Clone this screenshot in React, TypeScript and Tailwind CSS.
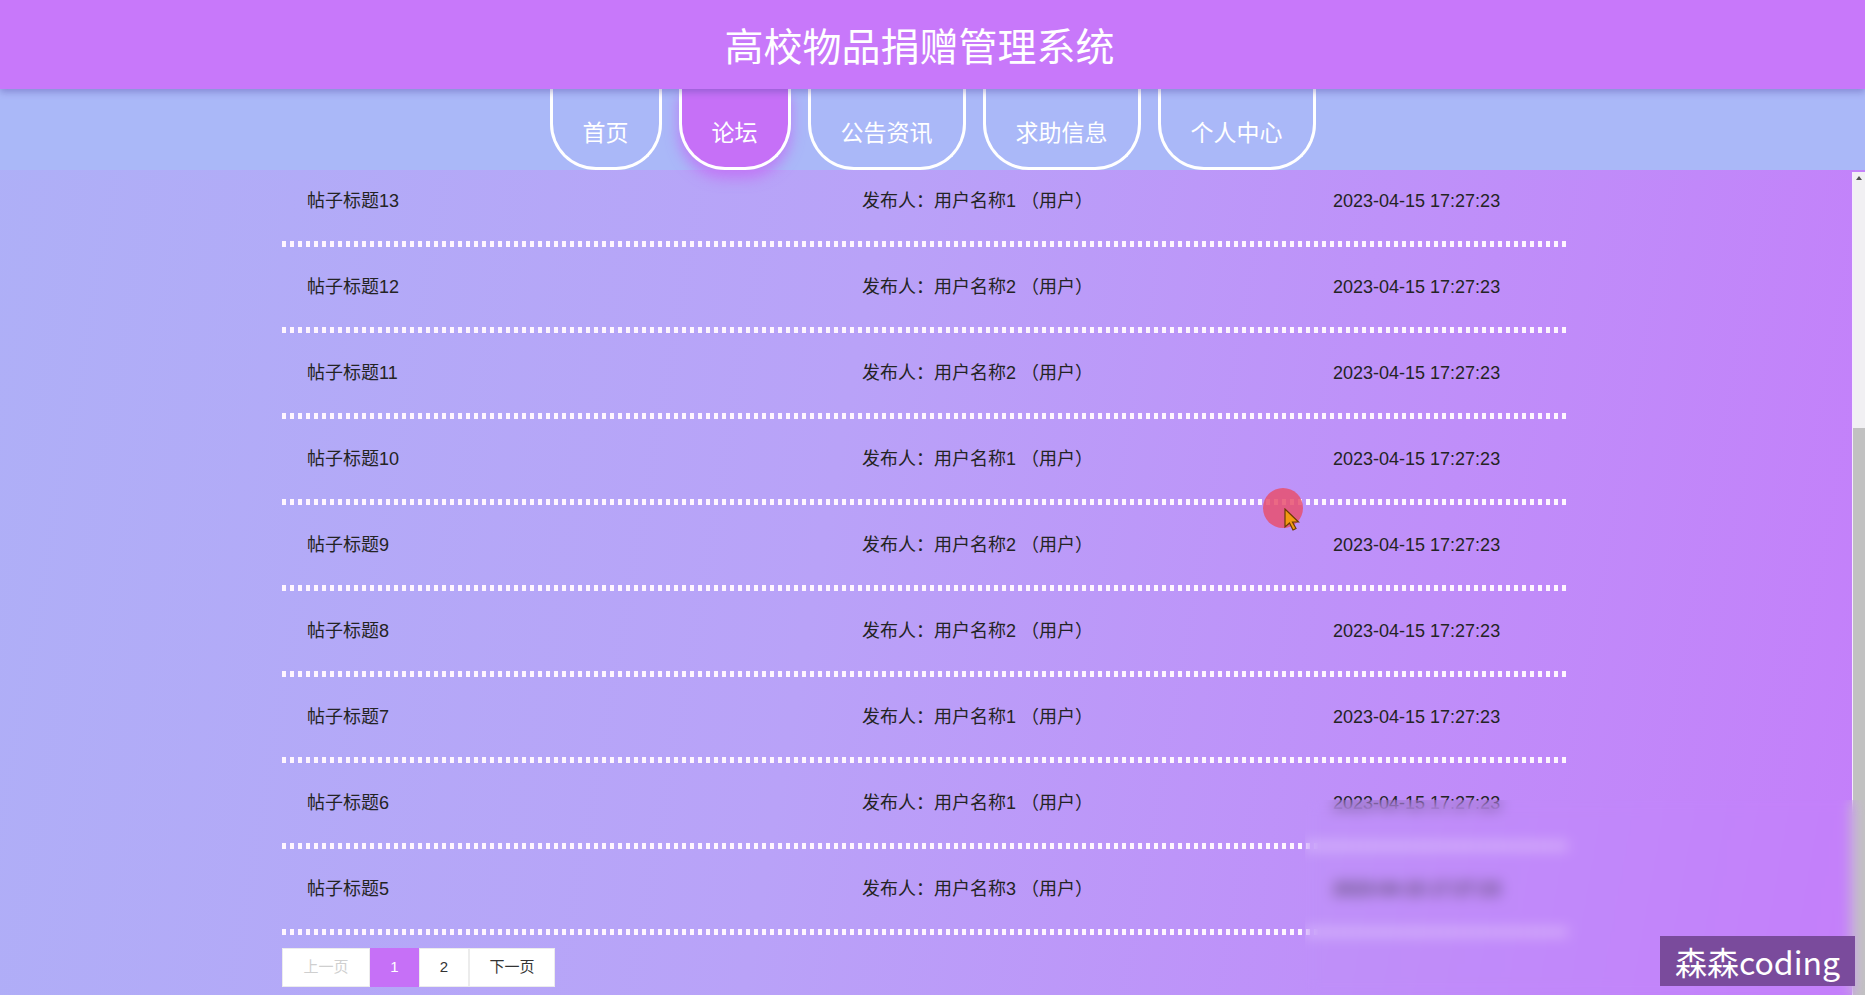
import React from "react";

const tabs = ["首页", "论坛", "公告资讯", "求助信息", "个人中心"];

// page 1 of the forum list, newest first
const posts = [
  { n: 13, u: 1 },
  { n: 12, u: 2 },
  { n: 11, u: 2 },
  { n: 10, u: 1 },
  { n: 9, u: 2 },
  { n: 8, u: 2 },
  { n: 7, u: 1 },
  { n: 6, u: 1 },
  { n: 5, u: 3 },
];

export default function App() {
  return (
    <div className="relative flex h-screen flex-col overflow-hidden bg-[linear-gradient(100deg,#aeb0f7_0%,#b9a2f8_45%,#c47efa_100%)] font-['Liberation_Sans','Noto_Sans_CJK_SC',sans-serif]">
      {/* Header */}
      <header className="relative z-20 flex h-[89px] shrink-0 items-center justify-center bg-[#c878fa] pr-[26px] shadow-[0_3px_7px_rgba(80,70,160,0.4)]">
        <h1 className="text-[39px] leading-none text-white font-['Noto_Sans_CJK_SC',sans-serif]">
          高校物品捐赠管理系统
        </h1>
      </header>

      {/* Nav tabs */}
      <nav className="relative z-10 flex h-[81px] shrink-0 justify-center gap-[17px] bg-[#aab8f8] font-['Noto_Sans_CJK_SC',sans-serif]">
        {tabs.map((t, i) => (
          <a
            key={t}
            href="#"
            className={
              i === 1
                ? "flex h-[81px] items-center rounded-b-[46px] border-x-[3px] border-b-[3px] border-white bg-[#c670f7] px-[30px] pt-[6px] text-[23px] text-white shadow-[0_8px_14px_rgba(196,100,245,0.7)]"
                : "flex h-[81px] items-center rounded-b-[46px] border-x-[3px] border-b-[3px] border-white px-[30px] pt-[6px] text-[23px] text-white"
            }
          >
            {t}
          </a>
        ))}
      </nav>

      {/* Post list */}
      <div
        ref={(el) => {
          if (el) el.scrollTop = el.scrollHeight;
        }}
        className="flex-1 overflow-y-auto pr-[17px]"
      >
        <div className="mx-auto w-[1284px] pt-[376px] pb-[8px]">
          {posts.map((p) => (
            <div key={p.n}>
              <div className="flex h-[80px] items-center pl-[25px] text-[18px] text-[#242424]">
                <span className="w-[555px]">帖子标题{p.n}</span>
                <span className="w-[471px]">发布人：用户名称{p.u} （用户）</span>
                <span>2023-04-15 17:27:23</span>
              </div>
              <div className="h-[6px] bg-[repeating-linear-gradient(90deg,#fff6ff_0px,#fff6ff_4px,transparent_4px,transparent_8px)]" />
            </div>
          ))}

          {/* Pagination */}
          <div className="mt-[13px] flex h-[39px] text-[15px]">
            <button className="w-[88px] border border-[#ececec] bg-white text-[#cfcfcf]">上一页</button>
            <button className="w-[49px] bg-[#c670f7] text-white">1</button>
            <button className="w-[50px] border border-[#ececec] bg-white text-[#333]">2</button>
            <button className="w-[86px] border border-[#ececec] bg-white text-[#333]">下一页</button>
          </div>
        </div>
      </div>

      {/* scrollbar of the list, as recorded */}
      <div className="pointer-events-none absolute right-0 top-[172px] bottom-0 flex w-[13px] flex-col border-l border-[#f6eaff] bg-[#f1f0f3]">
        <svg width="12" height="12" viewBox="0 0 12 12" className="shrink-0">
          <path d="M3 8 L6 4 L9 8 Z" fill="#505050" />
        </svg>
        <div className="mt-[244px] flex-1 bg-[#c1c1c1]" />
      </div>

      {/* click marker from the recording */}
      <div className="pointer-events-none absolute left-[1263px] top-[488px] h-[40px] w-[40px] rounded-full bg-[#e8506e]/85" />
      <svg
        className="pointer-events-none absolute left-[1284px] top-[508px]"
        width="18"
        height="24"
        viewBox="0 0 18 24"
      >
        <path d="M1 1 L1 19 L5.5 15 L9 22 L12 20.5 L8.5 14 L14.5 14 Z" fill="#f29a12" stroke="#6b3b00" strokeWidth="1.2" />
      </svg>

      {/* blurred corner of the recording */}
      <div className="pointer-events-none absolute left-[1305px] top-[800px] right-0 bottom-0 backdrop-blur-[7px]" />

      {/* watermark */}
      <div className="absolute left-[1660px] top-[936px] flex h-[50px] w-[195px] items-center justify-center bg-[#7a4b9c] text-[32px] leading-none text-white font-['Noto_Sans_CJK_SC',sans-serif]">
        森森coding
      </div>
    </div>
  );
}
